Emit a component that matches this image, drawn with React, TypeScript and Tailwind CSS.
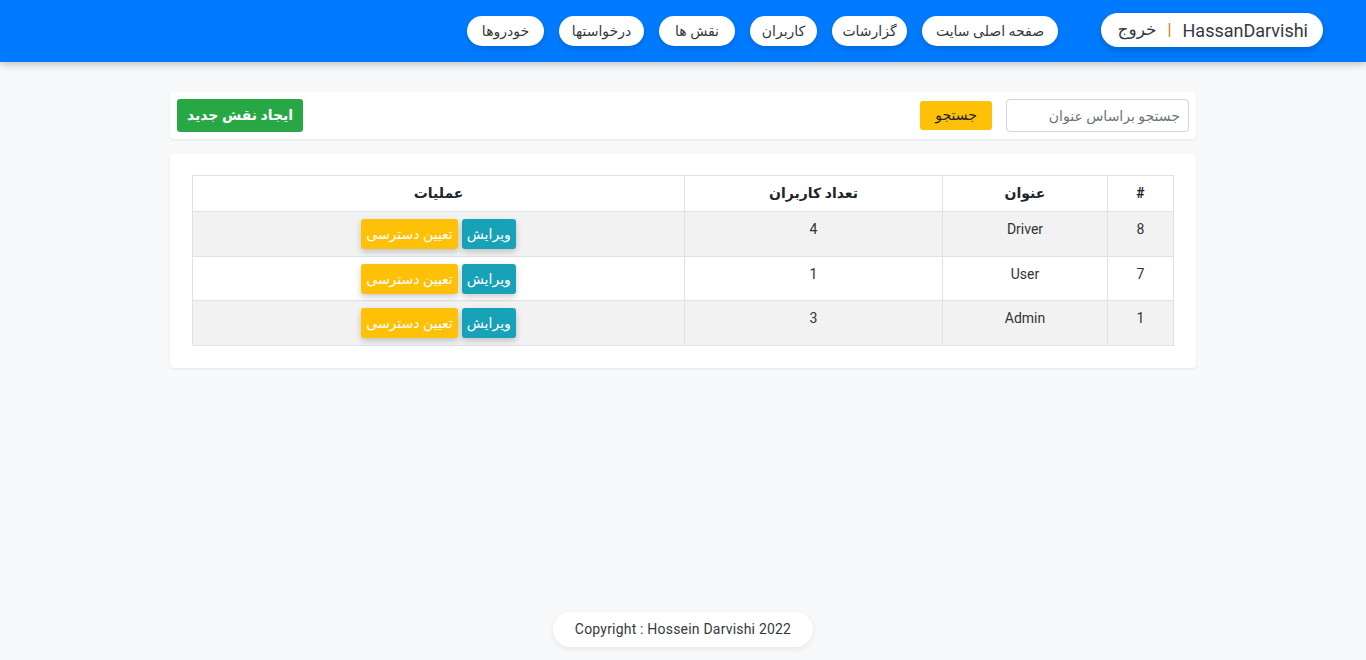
import React from "react";

const fa = { fontFamily: "Roboto, 'DejaVu Sans', 'Noto Sans', sans-serif" };

const navItems = [
  { t: "صفحه اصلی سایت", w: "w-[136px]" },
  { t: "گزارشات", w: "w-[75px]" },
  { t: "کاربران", w: "w-[67px]" },
  { t: "نقش ها", w: "w-[76px]" },
  { t: "درخواستها", w: "w-[85px]" },
  { t: "خودروها", w: "w-[77px]" },
];

const rows = [
  { id: "8", title: "Driver", count: "4" },
  { id: "7", title: "User", count: "1" },
  { id: "1", title: "Admin", count: "3" },
];

export default function App() {
  return (
    <div dir="rtl" style={fa} className="min-h-[660px] bg-[#f8f9fa] flex flex-col text-[#212529]">
      <header className="h-[62px] bg-[#007bff] shadow-[0_2px_8px_rgba(0,0,0,0.25)] flex items-center pr-[43px] relative z-10">
        <div className="w-[222px] h-[34px] px-[15px] mt-[-2px] bg-white rounded-full shadow-[0_3px_8px_rgba(0,0,0,0.2)] flex items-center gap-[11px] text-[18px] text-[#343a40]">
          <span dir="ltr">HassanDarvishi</span>
          <span className="text-[#c08000] text-[16px]">|</span>
          <span className="text-[17px]">خروج</span>
        </div>
        <nav className="flex gap-[15px] mr-[43px]">
          {navItems.map((n) => (
            <div key={n.t} className={`${n.w} h-[30px] bg-white rounded-full shadow-[0_3px_6px_rgba(0,0,0,0.15)] flex items-center justify-center whitespace-nowrap text-[14px] text-[#343a40]`}>
              {n.t}
            </div>
          ))}
        </nav>
      </header>

      <main className="w-[1026px] mx-auto mt-[30px] flex flex-col gap-[15px]">
        <div className="h-[47px] bg-white rounded-[4px] shadow-[0_1px_3px_rgba(0,0,0,0.08)] flex items-center px-[7px]">
          <input
            readOnly
            placeholder="جستجو براساس عنوان"
            className="w-[183px] h-[33px] border border-[#ced4da] rounded-[4px] px-[8px] text-[14px] text-[#495057] placeholder:text-[#6c757d] outline-none bg-white"
            style={fa}
          />
          <button className="mr-[14px] h-[29px] w-[72px] bg-[#ffc107] rounded-[3px] text-[14px] text-[#212529] flex items-center justify-center">
            جستجو
          </button>
          <button className="mr-auto h-[33px] w-[126px] bg-[#28a745] rounded-[3px] text-[14px] font-bold text-white flex items-center justify-center">
            ایجاد نقش جدید
          </button>
        </div>

        <div className="bg-white rounded-[4px] shadow-[0_1px_3px_rgba(0,0,0,0.08)] px-[22px] pt-[21px] pb-[22px]">
          <table className="w-full border-collapse text-[14px]">
            <thead>
              <tr className="h-[36px]">
                <th className="w-[66px] border border-[#dee2e6] font-bold">#</th>
                <th className="w-[165px] border border-[#dee2e6] font-bold">عنوان</th>
                <th className="w-[258px] border border-[#dee2e6] font-bold">تعداد کاربران</th>
                <th className="border border-[#dee2e6] font-bold">عملیات</th>
              </tr>
            </thead>
            <tbody>
              {rows.map((r, i) => (
                <tr key={r.id} className={i % 2 === 0 ? "bg-[#f2f2f2] h-[45px]" : "bg-white h-[44px]"}>
                  <td className="border border-[#dee2e6] text-center align-top pt-[7px] text-[#333]">{r.id}</td>
                  <td className="border border-[#dee2e6] text-center align-top pt-[7px] text-[#333]">{r.title}</td>
                  <td className="border border-[#dee2e6] text-center align-top pt-[7px] text-[#333]">{r.count}</td>
                  <td className="border border-[#dee2e6] align-top pt-[7px]">
                    <div className="flex justify-center gap-[4px]">
                      <button className="h-[30px] px-[5px] bg-[#17a2b8] rounded-[3px] text-white text-[14px] font-normal shadow-[0_3px_6px_rgba(0,0,0,0.2)] flex items-center justify-center">
                        ویرایش
                      </button>
                      <button className="h-[30px] px-[5px] bg-[#ffc107] rounded-[3px] text-white text-[14px] font-normal shadow-[0_3px_6px_rgba(0,0,0,0.2)] flex items-center justify-center whitespace-nowrap">
                        تعیین دسترسی
                      </button>
                    </div>
                  </td>
                </tr>
              ))}
            </tbody>
          </table>
        </div>
      </main>

      <footer className="mt-auto mb-[13px] flex justify-center">
        <div dir="ltr" className="h-[35px] px-[22px] bg-white rounded-full shadow-[0_2px_6px_rgba(0,0,0,0.08)] flex items-center text-[14px] text-[#343a40] tracking-[0.2px]">
          Copyright : Hossein Darvishi 2022
        </div>
      </footer>
    </div>
  );
}
